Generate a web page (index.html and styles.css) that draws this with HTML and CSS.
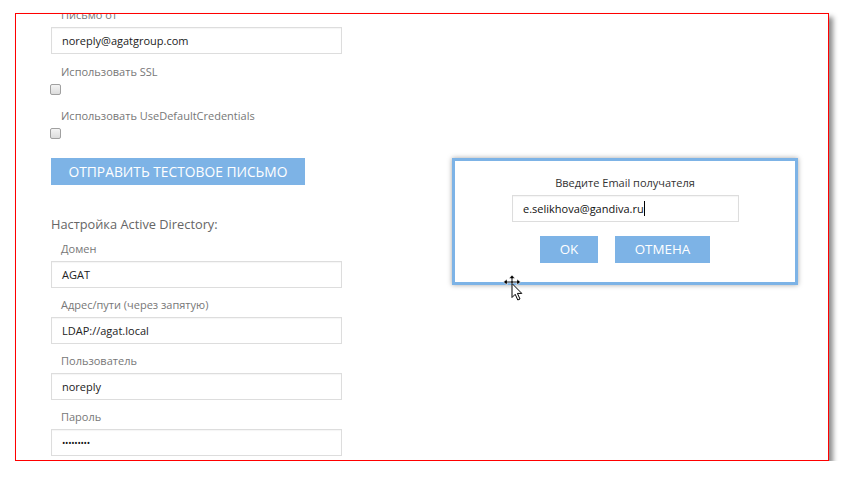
FILE: index.html
```html
<!DOCTYPE html>
<html lang="ru">
<head>
<meta charset="utf-8">
<link rel="stylesheet" href="styles.css">
</head>
<body>
<div class="frame">
  <div class="form">
    <div class="label first">Письмо от</div>
    <div class="input">noreply@agatgroup.com</div>
    <div class="label check-label">Использовать SSL</div>
    <span class="checkbox"></span>
    <div class="label check-label second">Использовать UseDefaultCredentials</div>
    <span class="checkbox"></span>
    <div class="btn wide">ОТПРАВИТЬ ТЕСТОВОЕ ПИСЬМО</div>
    <div class="section">Настройка Active Directory:</div>
    <div class="label">Домен</div>
    <div class="input">AGAT</div>
    <div class="label">Адрес/пути (через запятую)</div>
    <div class="input">LDAP://agat.local</div>
    <div class="label">Пользователь</div>
    <div class="input">noreply</div>
    <div class="label">Пароль</div>
    <div class="input pass">•••••••••</div>
  </div>
</div>
<div class="dialog">
  <div class="dlg-title">Введите Email получателя</div>
  <div class="input dlg-input">e.selikhova@gandiva.ru<span class="caret"></span></div>
  <div class="dlg-buttons">
    <div class="btn ok">OK</div>
    <div class="btn cancel">ОТМЕНА</div>
  </div>
</div>
<svg class="cursor" width="26" height="30" viewBox="0 0 26 30">
  <path d="M9 0 L12 3.5 L9.8 3.5 L9.8 6.2 L14 6.2 L14 4 L17.5 7 L14 10 L14 7.8 L9.8 7.8 L9.8 8.5 L8.2 8.5 L8.2 7.8 L4 7.8 L4 10 L0.5 7 L4 4 L4 6.2 L8.2 6.2 L8.2 3.5 L6 3.5 Z" fill="#000" stroke="#fff" stroke-width="0.6"/>
  <path d="M9 8.5 L9 22.5 L12.2 19.3 L14.8 25 L17 24 L14.4 18.4 L18.8 18.4 Z" fill="#fff" stroke="#000" stroke-width="1"/>
</svg>
</body>
</html>
```

FILE: styles.css
```css
html, body {
  margin: 0;
  padding: 0;
  background: #ffffff;
  font-family: "Open Sans", "Liberation Sans", sans-serif;
}

.frame {
  position: relative;
  margin: 13px 0 0 15px;
  width: 812px;
  height: 446px;
  border: 1px solid #ff0000;
  box-shadow: 4px 4px 5px rgba(0, 0, 0, 0.45);
  overflow: hidden;
  background: #ffffff;
}

.form {
  display: flex;
  flex-direction: column;
  align-items: flex-start;
  padding-left: 35px;
  margin-top: -8px;
}

.label {
  font-size: 11px;
  line-height: 17px;
  height: 17px;
  color: #777777;
  padding-left: 10px;
  margin: 8px 0 4px;
}

.label.first {
  margin-top: 0;
}

.label.check-label {
  margin: 9px 0 4px;
}

.label.check-label.second {
  margin-top: 12px;
}

.input {
  box-sizing: border-box;
  width: 291px;
  height: 27px;
  border: 1px solid #dddddd;
  box-shadow: inset 0 1px 1px rgba(0, 0, 0, 0.04);
  padding: 0 10px;
  font-size: 11px;
  line-height: 25px;
  color: #222222;
  background: #ffffff;
}

.input.pass {
  font-size: 9px;
  letter-spacing: -0.3px;
  color: #111;
}

.checkbox {
  display: block;
  box-sizing: border-box;
  width: 11px;
  height: 11px;
  margin-left: -1px;
  border: 1px solid #a0a0a0;
  border-radius: 2px;
  background: linear-gradient(#f4f4f4, #dcdcdc);
}

.btn {
  box-sizing: border-box;
  height: 27px;
  background: #7db3e6;
  color: #ffffff;
  font-size: 13.8px;
  line-height: 27px;
  text-align: center;
}

.btn.wide {
  width: 254px;
  margin-top: 19px;
}

.section {
  font-size: 12.8px;
  line-height: 20px;
  color: #666666;
  margin-top: 29px;
  margin-bottom: -2px;
}

.dialog {
  position: absolute;
  left: 452px;
  top: 158px;
  box-sizing: border-box;
  width: 346px;
  height: 127px;
  border: 3px solid #7db3e6;
  background: #ffffff;
  box-shadow: 0 0 5px rgba(0, 0, 0, 0.35);
  display: flex;
  flex-direction: column;
  align-items: center;
  padding-top: 13px;
}

.dlg-title {
  font-size: 11px;
  line-height: 17px;
  color: #333333;
  margin-bottom: 4px;
}

.dlg-input {
  width: 227px;
  color: #111111;
  margin-left: 1px;
}

.caret {
  display: inline-block;
  width: 1px;
  height: 15px;
  background: #000;
  vertical-align: -3px;
}

.dlg-buttons {
  display: flex;
  gap: 17px;
  margin-top: 14px;
}

.btn.ok {
  width: 58px;
  font-size: 13.4px;
}

.btn.cancel {
  width: 95px;
  font-size: 13.4px;
}

.cursor {
  position: absolute;
  left: 503px;
  top: 275px;
}
```
